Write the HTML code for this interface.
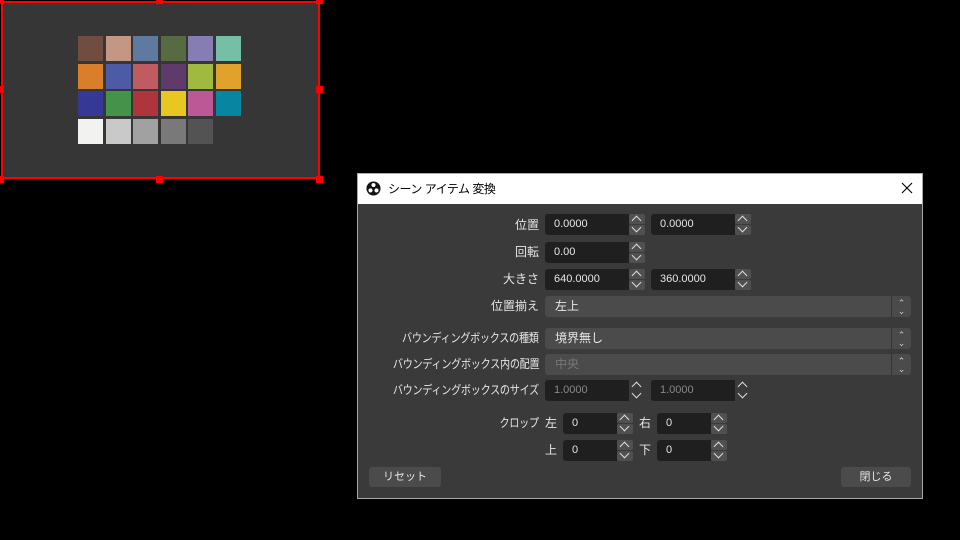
<!DOCTYPE html>
<html><head><meta charset="utf-8"><style>
*{margin:0;padding:0;box-sizing:border-box}
body{width:960px;height:540px;background:#000;position:relative;overflow:hidden;font-family:"Liberation Sans","Noto Sans CJK JP",sans-serif;font-size:12px;color:#e6e6e6}
.a{position:absolute}
.sw{position:absolute;width:25px;height:25px}
.h{position:absolute;width:7px;height:7px;background:#f00}
.lbl{position:absolute;text-align:right;white-space:nowrap;line-height:20px}
.lg{transform:scaleX(0.84);transform-origin:right center;letter-spacing:-0.3px}
.in{position:absolute;background:#1f1f1f;border-radius:3px 0 0 3px;height:21px;line-height:21px;padding-left:9px;font-size:11px}
.sp{position:absolute;width:16px;height:21px}
.sp div{height:10px;background:#505050;border-radius:2px;margin-bottom:1px;position:relative}
.sp div::after{content:"";position:absolute;left:4px;width:6px;height:6px;border-left:1.5px solid #ddd;border-top:1.5px solid #ddd}
.sp .u::after{top:3px;transform:rotate(45deg)}
.sp .d::after{top:-1px;transform:rotate(225deg)}
.cb{position:absolute;background:#4b4b4b;border-radius:3px;height:21px;line-height:21px;padding-left:10px;font-size:12px}
.cb .ar{position:absolute;right:0;top:0;width:20px;height:21px;border-left:1px solid #333;color:#ccc;font-size:9px;line-height:8px;text-align:center;padding-top:3px}
.btn{position:absolute;background:#4b4b4b;border-radius:3px;height:20px;line-height:20px;text-align:center;font-size:11px}
</style></head><body>
<div class="a" style="left:1px;top:1px;width:319px;height:178px;background:#363636;border:2px solid #f00"></div>
<div class="h" style="left:-3px;top:-3px"></div><div class="h" style="left:156px;top:-3px"></div><div class="h" style="left:316px;top:-3px"></div>
<div class="h" style="left:-3px;top:86px"></div><div class="h" style="left:316px;top:86px"></div>
<div class="h" style="left:-3px;top:176px"></div><div class="h" style="left:156px;top:176px"></div><div class="h" style="left:316px;top:176px"></div>
<div class="sw" style="left:78px;top:36px;background:#6f4d40"></div><div class="sw" style="left:106px;top:36px;background:#c49684"></div><div class="sw" style="left:133px;top:36px;background:#5f799f"></div><div class="sw" style="left:161px;top:36px;background:#566b42"></div><div class="sw" style="left:188px;top:36px;background:#857db3"></div><div class="sw" style="left:216px;top:36px;background:#74bfa6"></div>
<div class="sw" style="left:78px;top:64px;background:#d97e2a"></div><div class="sw" style="left:106px;top:64px;background:#4d5ba6"></div><div class="sw" style="left:133px;top:64px;background:#c05b62"></div><div class="sw" style="left:161px;top:64px;background:#5f3a6b"></div><div class="sw" style="left:188px;top:64px;background:#a0ba3f"></div><div class="sw" style="left:216px;top:64px;background:#e1a22c"></div>
<div class="sw" style="left:78px;top:91px;background:#363895"></div><div class="sw" style="left:106px;top:91px;background:#45924a"></div><div class="sw" style="left:133px;top:91px;background:#ae353c"></div><div class="sw" style="left:161px;top:91px;background:#e7c720"></div><div class="sw" style="left:188px;top:91px;background:#bb5895"></div><div class="sw" style="left:216px;top:91px;background:#0785a1"></div>
<div class="sw" style="left:78px;top:119px;background:#f2f2f1"></div><div class="sw" style="left:106px;top:119px;background:#c9c9c9"></div><div class="sw" style="left:133px;top:119px;background:#a1a1a1"></div><div class="sw" style="left:161px;top:119px;background:#797979"></div><div class="sw" style="left:188px;top:119px;background:#535353"></div>

<div class="a" style="left:357px;top:173px;width:566px;height:326px;background:#3a3a3a;border:1px solid #aaa"></div>
<div class="a" style="left:358px;top:174px;width:564px;height:30px;background:#fff;color:#000;font-size:12px;line-height:30px;padding-left:30px;letter-spacing:-0.5px">シーン アイテム 変換</div>
<svg class="a" style="left:366px;top:181px" width="15" height="15" viewBox="0 0 16 16"><circle cx="8" cy="8" r="7.5" fill="#111"/><circle cx="8" cy="4.3" r="2.2" fill="#fff"/><circle cx="4.8" cy="10" r="2.2" fill="#fff"/><circle cx="11.2" cy="10" r="2.2" fill="#fff"/><circle cx="8" cy="8" r="1.6" fill="#111"/></svg>
<svg class="a" style="left:901px;top:182px" width="12" height="12" viewBox="0 0 12 12"><path d="M1 1L11 11M11 1L1 11" stroke="#000" stroke-width="1.1"/></svg>

<div class="lbl" style="right:421px;top:215px">位置</div>
<div class="in" style="left:545px;top:214px;width:84px">0.0000</div><div class="sp" style="left:629px;top:214px"><div class="u"></div><div class="d"></div></div>
<div class="in" style="left:651px;top:214px;width:84px">0.0000</div><div class="sp" style="left:735px;top:214px"><div class="u"></div><div class="d"></div></div>
<div class="lbl" style="right:421px;top:242px">回転</div>
<div class="in" style="left:545px;top:242px;width:84px">0.00</div><div class="sp" style="left:629px;top:242px"><div class="u"></div><div class="d"></div></div>
<div class="lbl" style="right:421px;top:269px">大きさ</div>
<div class="in" style="left:545px;top:269px;width:84px">640.0000</div><div class="sp" style="left:629px;top:269px"><div class="u"></div><div class="d"></div></div>
<div class="in" style="left:651px;top:269px;width:84px">360.0000</div><div class="sp" style="left:735px;top:269px"><div class="u"></div><div class="d"></div></div>
<div class="lbl" style="right:421px;top:296px">位置揃え</div>
<div class="cb" style="left:545px;top:296px;width:366px">左上<div class="ar">⌃<br>⌄</div></div>
<div class="lbl lg" style="right:421px;top:328px">バウンディングボックスの種類</div>
<div class="cb" style="left:545px;top:328px;width:366px">境界無し<div class="ar">⌃<br>⌄</div></div>
<div class="lbl lg" style="right:421px;top:354px">バウンディングボックス内の配置</div>
<div class="cb" style="left:545px;top:354px;width:366px;color:#777">中央<div class="ar">⌃<br>⌄</div></div>
<div class="lbl lg" style="right:421px;top:380px">バウンディングボックスのサイズ</div>
<div class="in" style="left:545px;top:380px;width:84px;color:#888">1.0000</div><div class="sp" style="left:629px;top:380px"><div class="u" style="background:none"></div><div class="d" style="background:none"></div></div>
<div class="in" style="left:651px;top:380px;width:84px;color:#888">1.0000</div><div class="sp" style="left:735px;top:380px"><div class="u" style="background:none"></div><div class="d" style="background:none"></div></div>
<div class="lbl lg" style="right:421px;top:413px">クロップ</div>
<div class="lbl" style="left:545px;top:413px">左</div>
<div class="in" style="left:563px;top:413px;width:54px">0</div><div class="sp" style="left:617px;top:413px"><div class="u"></div><div class="d"></div></div>
<div class="lbl" style="left:639px;top:413px">右</div>
<div class="in" style="left:657px;top:413px;width:54px">0</div><div class="sp" style="left:711px;top:413px"><div class="u"></div><div class="d"></div></div>
<div class="lbl" style="left:545px;top:440px">上</div>
<div class="in" style="left:563px;top:440px;width:54px">0</div><div class="sp" style="left:617px;top:440px"><div class="u"></div><div class="d"></div></div>
<div class="lbl" style="left:639px;top:440px">下</div>
<div class="in" style="left:657px;top:440px;width:54px">0</div><div class="sp" style="left:711px;top:440px"><div class="u"></div><div class="d"></div></div>
<div class="btn" style="left:369px;top:467px;width:72px">リセット</div>
<div class="btn" style="left:841px;top:467px;width:70px">閉じる</div>
</body></html>
